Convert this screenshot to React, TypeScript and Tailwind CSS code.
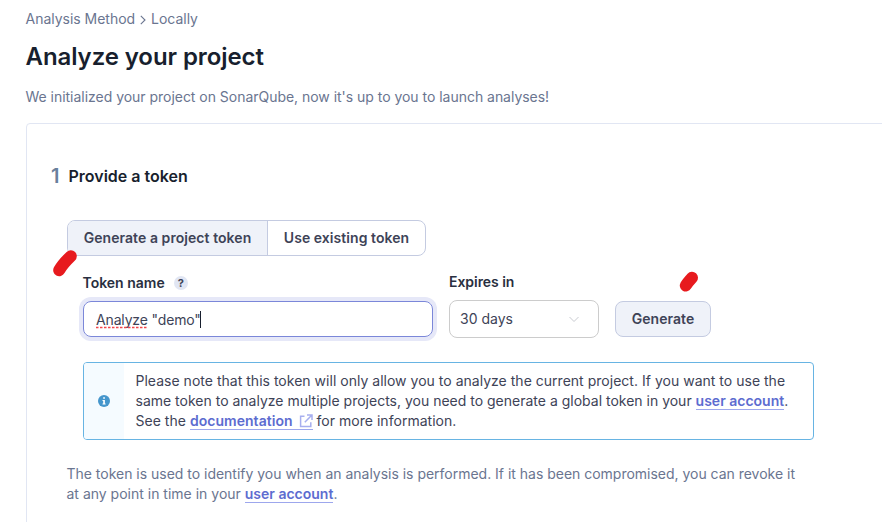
import type { ReactNode } from 'react';

function Link({ children }: { children: ReactNode }) {
  return (
    <a className="border-b border-[#9da7ed] font-semibold text-[#5d6cd0]">{children}</a>
  );
}

function Marker({ className, d, w, h }: { className: string; d: string; w: number; h: number }) {
  return (
    <svg className={className} width={w} height={h} viewBox={`0 0 ${w} ${h}`} fill="none">
      <path d={d} stroke="#e71a1e" strokeWidth="12" strokeLinecap="round" />
    </svg>
  );
}

export default function App() {
  return (
    <main className="h-[522px] w-[882px] overflow-hidden bg-white pt-[9px] pl-[25.5px] font-['Inter',sans-serif] text-[14px] leading-5 text-[#6a7590]">
      <nav className="flex items-center">
        <span className="tracking-[-0.02px]">Analysis Method</span>
        <svg className="mt-[2px] mr-[5px] ml-[5px]" width="6" height="10" viewBox="0 0 6 10" fill="none">
          <path d="M.8 .8L5 5 .8 9.2" stroke="#6a7590" strokeWidth="1.1" />
        </svg>
        <span className="tracking-[-0.02px]">Locally</span>
      </nav>
      <h1 className="mt-3 text-2xl leading-8 font-semibold tracking-[-0.08px] text-[#181f2e]">Analyze your project</h1>
      <p className="mt-[14px] tracking-[-0.028px]">We initialized your project on SonarQube, now it's up to you to launch analyses!</p>

      <section className="mt-4 ml-[0.5px] h-[420px] w-[900px] rounded border border-[#e1e6f3] pt-10 pl-6">
        <h2 className="flex h-6 items-center">
          <span className="w-[17.5px] text-[20px] leading-6 font-semibold text-[#69809b]">1</span>
          <span className="text-base leading-6 font-semibold text-[#181f2e]">Provide a token</span>
        </h2>

        <div className="relative mt-8 ml-4">
          <div className="flex h-9 w-[359px] overflow-hidden rounded-lg border border-[#c4cbe1] font-semibold text-[#3e4357]">
            <button className="w-[200px] border-r border-[#c4cbe1] bg-[#eff2f9] tracking-[0.06px]">Generate a project token</button>
            <button className="flex-1 tracking-[0.06px]">Use existing token</button>
          </div>
          <Marker className="absolute top-[28px] left-[-15px]" w={28} h={32} d="M7.2 22.2 C9.2 18.5 13 13.8 18.8 8.2" />

          <div className="relative mt-4 ml-4 flex">
            <div className="w-[350px]">
              <label className="mt-px flex h-5 items-center font-semibold text-[#292f40]">
                <span className="ml-[-0.5px]">Token name</span>
                <span className="ml-[9px] flex size-[14px] items-center justify-center rounded-full bg-[#e1e6f3] text-[11px] leading-none font-bold text-[#3e4357]">?</span>
              </label>
              <div className="mt-2 flex h-9 items-center rounded-lg border border-[#7b87d9] pl-3 tracking-[-0.15px] text-[#3e4357] ring-4 ring-[#e6e8f8]">
                <span className="relative mt-[2px]">
                  Analyze
                  <svg className="absolute top-[16px] left-0" width="52" height="3" viewBox="0 0 52 3">
                    <path d="M0 1.5H52" stroke="#f2464a" strokeWidth="1.5" strokeDasharray="2.5 1.5" />
                  </svg>
                </span>
                <span className="mt-[2px]">&nbsp;"demo"</span>
                <span className="ml-[-1px] h-[17px] w-px bg-[#181f2e]" />
              </div>
            </div>
            <div className="ml-4 w-[150px]">
              <label className="block font-semibold tracking-[-0.05px] text-[#292f40]">Expires in</label>
              <div className="mt-2 flex h-[38px] items-center justify-between rounded-lg border border-[#cccccc] pr-[19px] pl-[10px] text-[#3e4357]">
                30 days
                <svg width="10" height="7" viewBox="0 0 10 7" fill="none">
                  <path d="M.5 1L5 5.5 9.5 1" stroke="#c8cad0" />
                </svg>
              </div>
            </div>
            <button className="mt-[29px] ml-4 h-9 w-24 rounded-lg border border-[#c4cbe1] bg-[#eff2f9] font-semibold tracking-[0.05px] text-[#3e4357]">Generate</button>
            <Marker className="absolute top-[-8px] left-[591px]" w={32} h={34} d="M11.8 21.5 C13 19.5 15 17 18 13.7" />
          </div>

          <aside className="mt-6 ml-4 flex h-[78px] w-[731px] overflow-hidden rounded border border-[#67b4e3] text-[#3e4357]">
            <div className="flex w-10 shrink-0 items-center justify-center bg-[#f5fbff]">
              <svg width="12" height="12" viewBox="0 0 12 12">
                <circle cx="6" cy="6" r="6" fill="#4596cc" />
                <path d="M5.2 2.2h1.7v1.6H5.2zM4.5 5h2.4v3.4h.7v1.1H4.5V8.4h.7V6.1h-.7z" fill="#fff" />
              </svg>
            </div>
            <p className="pt-2 pl-[11.5px] whitespace-nowrap">
              <span className="tracking-[0.018px]">Please note that this token will only allow you to analyze the current project. If you want to use the</span><br />
              same token to analyze multiple projects, you need to generate a global token in your <Link>user account</Link>.<br />
              <span className="tracking-[0.03px]">See the <Link>documentation<svg className="ml-[6px] inline-block align-[-2px]" width="14" height="14" viewBox="0 0 14 14" fill="none" stroke="#a7afef" strokeWidth="1.5">
                <path d="M5.5 2.2H1.6v10.2h10.2V8.2M8 1h5v5M12.7 1.3L5.8 8.2" />
              </svg></Link> for more information.</span>
            </p>
          </aside>
          <p className="mt-6 ml-[-0.5px] whitespace-nowrap">
            <span className="tracking-[-0.015px]">The token is used to identify you when an analysis is performed. If it has been compromised, you can revoke it</span><br />
            at any point in time in your <Link>user account</Link>.
          </p>
        </div>
      </section>
    </main>
  );
}
